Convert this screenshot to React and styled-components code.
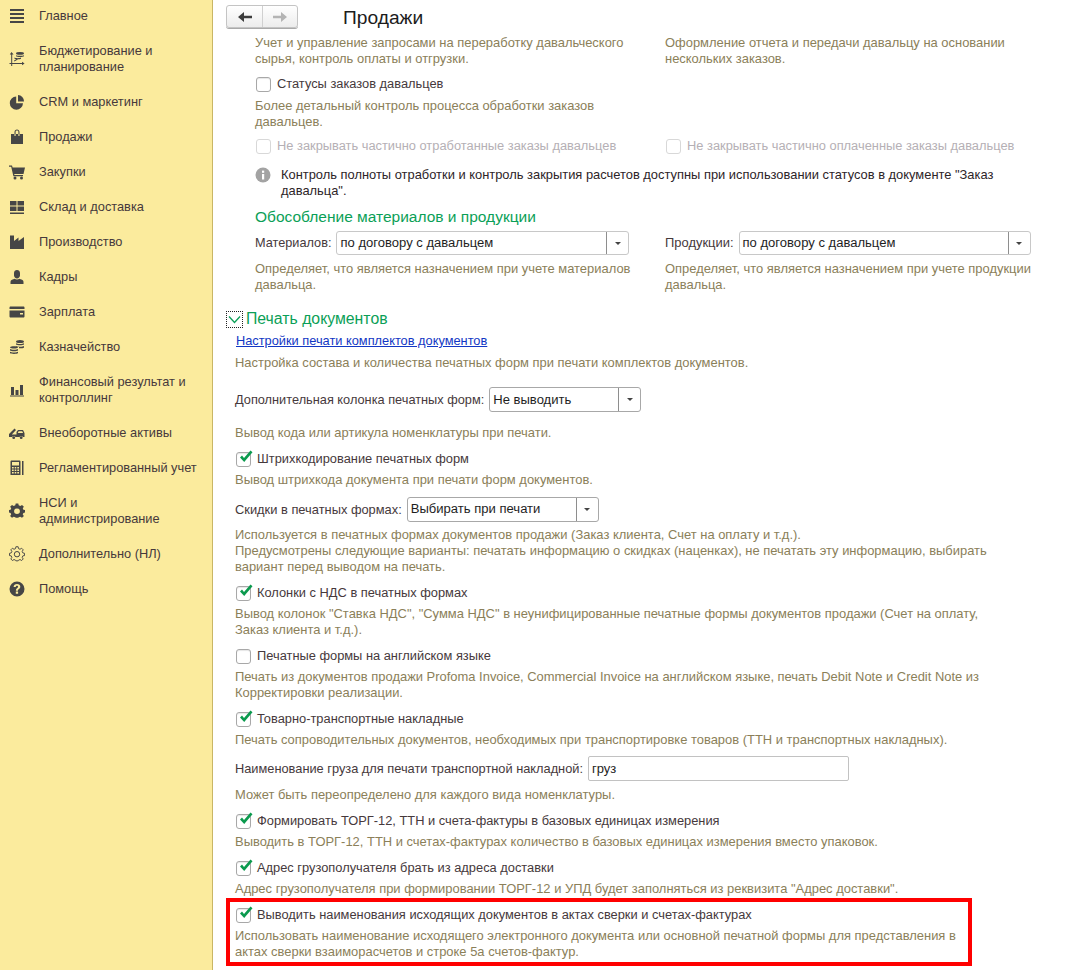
import React from "react";
import styled, { createGlobalStyle } from "styled-components";

const Global = createGlobalStyle`
  html, body { margin: 0; padding: 0; height: 970px; overflow: hidden; background: #fff; }
  body { font-family: "Liberation Sans", Arial, sans-serif; font-size: 12.8px; line-height: 16px; }
`;

const Page = styled.div`display: flex; width: 1087px; height: 970px; overflow: hidden;`;
const Sidebar = styled.nav`
  width: 212px; flex: none; height: 970px; box-sizing: content-box;
  background: #fbeb9d; border-right: 1px solid #c9b665;
`;
const NavItem = styled.div`
  display: flex; align-items: center; padding: 9px 0 10px 9px;
  color: #46393c; font-size: 12.8px;
  &:first-child { padding-top: 8px; }
`;
const NavIcon = styled.span`
  width: 16px; height: 16px; flex: none; margin-right: 14px; display: block;
  svg { display: block; width: 16px; height: 16px; fill: #464646; stroke: none; }
`;
const Main = styled.main`flex: 1; display: flex; flex-direction: column; min-width: 0; height: 970px;`;
const Header = styled.header`
  flex: none; height: 37px; display: flex; align-items: center; box-sizing: border-box;
  padding: 0 0 1px 13px; background: #fff;
`;
const NavGroup = styled.div`
  display: flex; width: 72px; height: 23px; margin-top: -3px; box-sizing: border-box;
  border: 1px solid #c4c4c4; border-radius: 3px; box-shadow: 0 1px 0 #a9a9a9;
  background: linear-gradient(#ffffff, #ececec);
`;
const NavBtn = styled.span`
  flex: ${(p) => p.$grow || 1}; display: flex; align-items: center; justify-content: center;
  & + & { border-left: 1px solid #d0d0d0; }
  svg { width: 14px; height: 12px; fill: ${(p) => p.$off ? "#b4b4b4" : "#3c3c3c"}; }
`;
const Title = styled.h1`margin: -1px 0 0 45px; font-size: 19.2px; line-height: 24px; font-weight: 400; color: #1c1c1c;`;
const Scroll = styled.div`flex: 1; overflow: hidden; min-height: 0;`;
const Content = styled.div`margin-top: -2px; padding-left: 22px;`;
const Upper = styled.div`padding-left: 20px; display: grid; grid-template-columns: 410px 1fr;`;
const Full = styled.div`grid-column: 1 / -1;`;
const Desc = styled.div`margin-top: ${(p) => p.$mt ?? 6}px; color: #8b8059; font-size: 12.95px; white-space: nowrap;`;
const CheckRow = styled.label`
  display: flex; align-items: center; height: 16px; margin-top: ${(p) => p.$mt ?? 10}px;
  color: ${(p) => p.$off ? "#b5b0b5" : "#46393c"}; font-size: 12.85px; white-space: nowrap;
`;
const Box = styled.span`
  position: relative; width: 15px; height: 15px; box-sizing: border-box; flex: none; margin-right: 6px;
  border: 1px solid ${(p) => p.$off ? "#d8d8d8" : "#a8a8a8"}; border-radius: 3px; background: #fff;
  margin-left: 1px;
  box-shadow: ${(p) => p.$off ? "none" : "inset 0 1px 1px #e6e6e6"};
  svg { position: absolute; left: 0; top: -4px; width: 17px; height: 17px; }
`;
const InfoRow = styled.div`display: flex; margin-top: 13px; color: #2d2428; font-size: 12.9px; white-space: nowrap;`;
const InfoIcon = styled.span`
  flex: none; width: 16px; height: 16px; margin-right: 10px;
  svg { display: block; width: 16px; height: 16px; }
`;
const Heading = styled.h2`
  margin: 8px 0 0; font-size: 15.5px; line-height: 20px; font-weight: 400; color: #0b9f57;
`;
const FieldRow = styled.div`
  display: flex; align-items: center; height: ${(p) => p.$h || 25}px; margin-top: ${(p) => p.$mt ?? 9}px;
  color: #46393c; white-space: nowrap;
`;
const FieldLabel = styled.span`margin-right: 5px; font-size: ${(p) => p.$fs || 12.8}px;`;
const Select = styled.div`
  display: flex; width: ${(p) => p.$w}px; height: 100%; box-sizing: border-box;
  border: 1px solid ${(p) => p.$dark ? "#a8a8a8" : "#c8c8c8"}; border-radius: 3px; background: #fff;
  color: #1e1e1e;
`;
const SelectText = styled.span`flex: 1; padding-left: 3px; line-height: ${(p) => p.$lh || 22}px; font-size: 13.05px;`;
const SelectBtn = styled.span`
  width: 21px; flex: none; border-left: 1px solid #8e8e8e; display: flex; align-items: center; justify-content: center;
  &::after { content: ""; border: 3px solid transparent; border-top: 3px solid #444; border-bottom: 0; }
`;
const TextInput = styled.div`
  width: 261px; height: 100%; box-sizing: border-box; border: 1px solid #c2c2c2; border-radius: 2px;
  padding-left: 3px; line-height: 23px; color: #1e1e1e; font-size: 13px;
`;
const Section = styled.div`display: flex; align-items: center; margin: 16px 0 0 -9px; height: 20px;`;
const Toggle = styled.span`
  width: 17px; height: 17px; box-sizing: border-box; border: 1px dotted #222; margin-right: 3px; flex: none;
  display: flex; align-items: center; justify-content: center;
  svg { width: 13px; height: 9px; fill: none; stroke: #0b9f57; stroke-width: 1.3; }
`;
const SectionTitle = styled(Heading)`margin: 0; font-size: 15.8px;`;
const Link = styled.a`display: block; margin: 4px 0 0 1px; color: #1237c4; text-decoration: underline; font-size: 12.8px;`;
const Highlight = styled.div`
  margin: 5px 0 0 -5px; width: 733px; padding: 5px 0 2px 5px;
  outline: 4px solid #ff0000;
`;

const I = ({ children }) => <NavIcon><svg viewBox="0 0 16 16">{children}</svg></NavIcon>;

const icons = {
  menu: <><rect x="1" y="1" width="14" height="2" /><rect x="1" y="5" width="14" height="2" /><rect x="1" y="9" width="14" height="2" /><rect x="1" y="13" width="14" height="2" /></>,
  budget: <><path d="M2.5 1 4.6 3.4H3.2V12H13V10.7L15.6 12.5 13 14.3V13H3.2V15H2.2V13H0.5V12H2.2V3.4H0.8Z" /><ellipse cx="11" cy="2.4" rx="4" ry="1.4" /><path d="M7 4.2C8 5 14 5 15 4.2V5.2C14 6.2 8 6.2 7 5.2ZM5.5 6.6C6.5 7.4 11 7.4 12 6.6V7.7C11 8.5 6.5 8.5 5.5 7.7ZM5 9.6 8.5 7.8 8.8 8.6 5.4 10.5Z" /></>,
  pie: <><path d="M7.2 2.5A6.6 6.6 0 1 0 14 9.3H7.2Z" /><path d="M9 1A6.4 6.4 0 0 1 15 7.5H9Z" /></>,
  bag: <><path d="M2 5H5.5V3C5.5 1.5 6.6.5 8 .5S10.5 1.5 10.5 3V5H14V15H2ZM6.6 5H9.4V3C9.4 2.2 8.8 1.6 8 1.6S6.6 2.2 6.6 3ZM5.5 5V7H6.6V5ZM9.4 5V7H10.5V5Z" fillRule="evenodd" /></>,
  cart: <><path d="M0 1.5H3L3.6 3.5H16L14.5 10H5.2L5.5 11H14V12.3H4.4L2.2 2.8H0Z" /><circle cx="6" cy="14" r="1.5" /><circle cx="12.5" cy="14" r="1.5" /></>,
  grid: <><rect x="1" y="2" width="6.5" height="4.5" /><rect x="8.5" y="2" width="6.5" height="4.5" /><rect x="1" y="7.5" width="6.5" height="4.5" /><rect x="8.5" y="7.5" width="6.5" height="4.5" /><rect x="1" y="13.5" width="14" height="1.5" /></>,
  factory: <path d="M1 1.5H5V7L9.5 3.5V7L15 3V15H1Z" />,
  person: <path d="M5 4C5 2 6.3 1 8 1S11 2 11 4V6.5C11 8 9.6 9.5 8 9.5S5 8 5 6.5ZM1.5 15V12.8C1.5 11 4 10.4 5.7 9.8 6.6 10.7 9.4 10.7 10.3 9.8 12 10.4 14.5 11 14.5 12.8V15Z" />,
  card: <path d="M1.5 2.5H14.5C15 2.5 15.5 3 15.5 3.5V5H.5V3.5C.5 3 1 2.5 1.5 2.5ZM.5 6.5H15.5V12.5C15.5 13 15 13.5 14.5 13.5H1.5C1 13.5.5 13 .5 12.5ZM11 9V10.5H14V9Z" fillRule="evenodd" />,
  coins: <><ellipse cx="11" cy="2.5" rx="4" ry="1.6" /><path d="M7 4.2C8 5.2 14 5.2 15 4.2V5.6C14 6.6 8 6.6 7 5.6ZM7 7C8 8 14 8 15 7V8.4C14 9.4 11 9.4 10 9.2V8H7ZM1 8.4C2 7 8 7 9 8.4 8 9.7 2 9.7 1 8.4ZM1 10C2 11 8 11 9 10V11.4C8 12.4 2 12.4 1 11.4ZM1 12.7C2 13.7 8 13.7 9 12.7V14C8 15.2 2 15.2 1 14Z" /></>,
  bars: <><rect x="2" y="5" width="3" height="8" /><rect x="6.5" y="8" width="3" height="5" /><rect x="11" y="3" width="3" height="10" /><rect x="1" y="13.5" width="14" height="1" /></>,
  truck: <><path d="M0 9 5.5 3.5 7 5 2.8 9.5H7.5V7L9 5H14L15.5 8V12H14A2 2 0 0 0 10.5 12H6.5A2 2 0 0 0 3 12H0ZM9.6 6.3 8.8 8H14.1L13.2 6.3Z" fillRule="evenodd" /><circle cx="4.7" cy="12.7" r="1.4" /><circle cx="12.2" cy="12.7" r="1.4" /></>,
  calc: <path d="M1.5 1.5C1.5 1 2 .5 2.5.5H10.5C11 .5 11.5 1 11.5 1.5V15H1.5ZM3 2V5.5H10V2ZM3 7V8.5H4.7V7ZM5.7 7V8.5H7.3V7ZM8.3 7V8.5H10V7ZM3 9.5V11H4.7V9.5ZM5.7 9.5V11H7.3V9.5ZM8.3 9.5V11H10V9.5ZM3 12V13.5H4.7V12ZM5.7 12V13.5H7.3V12ZM8.3 12V13.5H10V12ZM13 1H14.5V15H13Z" fillRule="evenodd" />,
  gear: <path d="M6.7 1H9.3L9.7 3 11.3 3.7 13 2.6 14.9 4.4 13.8 6.1 14.4 7.7 16 8V10.6L14.4 11 13.7 12.6 14.9 14.3 13 16.1 11.2 15 9.7 15.6 9.3 16H6.7L6.3 15.6 4.7 15 3 16.1 1.1 14.3 2.2 12.6 1.6 11 0 10.6V8L1.6 7.7 2.2 6.1 1.1 4.4 3 2.6 4.7 3.7 6.3 3ZM8 6.4A2.9 2.9 0 1 0 8 12.2 2.9 2.9 0 1 0 8 6.4Z" fillRule="evenodd" transform="translate(0 -.5) scale(1 .95)" />,
  gearO: <g fill="none" stroke="#464646" strokeWidth="1"><path d="M6.8 1H9.2L9.6 3 11.2 3.7 12.9 2.6 14.6 4.3 13.5 6 14.2 7.6 16 8V10.4L14.2 10.7 13.5 12.3 14.6 14 12.9 15.7 11.2 14.6 9.6 15.3 9.2 16H6.8L6.4 15.3 4.8 14.6 3.1 15.7 1.4 14 2.5 12.3 1.8 10.7 0 10.4V8L1.8 7.6 2.5 6 1.4 4.3 3.1 2.6 4.8 3.7 6.4 3Z" transform="translate(.5 -.2) scale(.94)" /><circle cx="8" cy="8.2" r="2.7" /></g>,
  help: <path d="M8 .5A7.5 7.5 0 1 0 8 15.5 7.5 7.5 0 0 0 8 .5ZM8 3C10 3 11.3 4.1 11.3 5.7 11.3 7 10.5 7.6 9.7 8.2 9.1 8.6 9 8.9 9 9.7H6.9C6.9 8.4 7.2 7.8 8 7.2 8.7 6.7 9.1 6.4 9.1 5.8 9.1 5.2 8.7 4.8 8 4.8 7.2 4.8 6.8 5.3 6.7 6.1H4.6C4.7 4.2 6 3 8 3ZM6.8 10.6H9.1V12.8H6.8Z" fillRule="evenodd" />,
};

const menu = [
  ["menu", "Главное"], ["budget", <>Бюджетирование и<br />планирование</>], ["pie", "CRM и маркетинг"],
  ["bag", "Продажи"], ["cart", "Закупки"], ["grid", "Склад и доставка"], ["factory", "Производство"],
  ["person", "Кадры"], ["card", "Зарплата"], ["coins", "Казначейство"],
  ["bars", <>Финансовый результат и<br />контроллинг</>], ["truck", "Внеоборотные активы"],
  ["calc", "Регламентированный учет"], ["gear", <>НСИ и<br />администрирование</>],
  ["gearO", "Дополнительно (НЛ)"], ["help", "Помощь"],
];

const Check = ({ on, off, mt, children }) => (
  <CheckRow $off={off} $mt={mt}>
    <Box $off={off}>
      {on && <svg viewBox="0 0 17 17"><path d="M3 8.5 5 6.5 7 9 13.5 1.5 15.5 3.2 7.2 13Z" fill="#0b9a4e" /></svg>}
    </Box>
    {children}
  </CheckRow>
);

const Sel = ({ w, dark, lh, children }) => (
  <Select $w={w} $dark={dark}><SelectText $lh={lh}>{children}</SelectText><SelectBtn /></Select>
);

export default function App() {
  return (
    <Page>
      <Global />
      <Sidebar>
        {menu.map(([k, t], i) => (
          <NavItem key={i}><I>{icons[k]}</I><span>{t}</span></NavItem>
        ))}
      </Sidebar>
      <Main>
        <Header>
          <NavGroup>
            <NavBtn $grow={37}><svg viewBox="0 0 14 12"><path d="M0 6 6 1V4.8H14V7.2H6V11Z" /></svg></NavBtn>
            <NavBtn $grow={35} $off><svg viewBox="0 0 14 12"><path d="M14 6 8 1V4.8H0V7.2H8V11Z" /></svg></NavBtn>
          </NavGroup>
          <Title>Продажи</Title>
        </Header>
        <Scroll>
          <Content>
            <Upper>
              <Desc $mt={0}>Учет и управление запросами на переработку давальческого<br />сырья, контроль оплаты и отгрузки.</Desc>
              <Desc $mt={0}>Оформление отчета и передачи давальцу на основании<br />нескольких заказов.</Desc>
              <Full>
                <Check mt={9}>Статусы заказов давальцев</Check>
                <Desc>Более детальный контроль процесса обработки заказов<br />давальцев.</Desc>
              </Full>
              <Check off mt={8}>Не закрывать частично отработанные заказы давальцев</Check>
              <Check off mt={8}>Не закрывать частично оплаченные заказы давальцев</Check>
              <Full>
                <InfoRow>
                  <InfoIcon>
                    <svg viewBox="0 0 16 16"><circle cx="8" cy="8" r="7.5" fill="#a3a3a3" /><rect x="7" y="7" width="2.2" height="5.5" fill="#fff" /><rect x="7" y="3.6" width="2.2" height="2.2" fill="#fff" /></svg>
                  </InfoIcon>
                  <span>Контроль полноты отработки и контроль закрытия расчетов доступны при использовании статусов в документе "Заказ<br />давальца".</span>
                </InfoRow>
                <Heading>Обособление материалов и продукции</Heading>
              </Full>
              <div>
                <FieldRow $h={24} $mt={4}><FieldLabel $fs={12.72}>Материалов:</FieldLabel><Sel w={293} lh={21}>по договору с давальцем</Sel></FieldRow>
                <Desc>Определяет, что является назначением при учете материалов<br />давальца.</Desc>
              </div>
              <div>
                <FieldRow $h={24} $mt={4}><FieldLabel $fs={12.95}>Продукции:</FieldLabel><Sel w={292} lh={21}>по договору с давальцем</Sel></FieldRow>
                <Desc>Определяет, что является назначением при учете продукции<br />давальца.</Desc>
              </div>
            </Upper>
            <Section>
              <Toggle><svg viewBox="0 0 13 9"><path d="M1 1.5 6.5 7.5 12 1.5" /></svg></Toggle>
              <SectionTitle>Печать документов</SectionTitle>
            </Section>
            <Link>Настройки печати комплектов документов</Link>
            <Desc>Настройка состава и количества печатных форм при печати комплектов документов.</Desc>
            <FieldRow $mt={16}><FieldLabel $fs={12.78}>Дополнительная колонка печатных форм:</FieldLabel><Sel w={152} dark lh={23}>Не выводить</Sel></FieldRow>
            <Desc $mt={13}>Вывод кода или артикула номенклатуры при печати.</Desc>
            <Check on>Штрихкодирование печатных форм</Check>
            <Desc $mt={5}>Вывод штрихкода документа при печати форм документов.</Desc>
            <FieldRow><FieldLabel $fs={12.87}>Скидки в печатных формах:</FieldLabel><Sel w={192} dark>Выбирать при печати</Sel></FieldRow>
            <Desc $mt={5}>Используется в печатных формах документов продажи (Заказ клиента, Счет на оплату и т.д.).<br />Предусмотрены следующие варианты: печатать информацию о скидках (наценках), не печатать эту информацию, выбирать<br />вариант перед выводом на печать.</Desc>
            <Check on>Колонки с НДС в печатных формах</Check>
            <Desc $mt={5}>Вывод колонок "Ставка НДС", "Сумма НДС" в неунифицированные печатные формы документов продажи (Счет на оплату,<br />Заказ клиента и т.д.).</Desc>
            <Check>Печатные формы на английском языке</Check>
            <Desc $mt={5}>Печать из документов продажи Profoma Invoice, Commercial Invoice на английском языке, печать Debit Note и Credit Note из<br />Корректировки реализации.</Desc>
            <Check on>Товарно-транспортные накладные</Check>
            <Desc $mt={5}>Печать сопроводительных документов, необходимых при транспортировке товаров (ТТН и транспортных накладных).</Desc>
            <FieldRow $mt={8}><FieldLabel>Наименование груза для печати транспортной накладной:</FieldLabel><TextInput>груз</TextInput></FieldRow>
            <Desc>Может быть переопределено для каждого вида номенклатуры.</Desc>
            <Check on>Формировать ТОРГ-12, ТТН и счета-фактуры в базовых единицах измерения</Check>
            <Desc $mt={5}>Выводить в ТОРГ-12, ТТН и счетах-фактурах количество в базовых единицах измерения вместо упаковок.</Desc>
            <Check on>Адрес грузополучателя брать из адреса доставки</Check>
            <Desc $mt={5}>Адрес грузополучателя при формировании ТОРГ-12 и УПД будет заполняться из реквизита "Адрес доставки".</Desc>
            <Highlight>
              <Check on mt={0}>Выводить наименования исходящих документов в актах сверки и счетах-фактурах</Check>
              <Desc $mt={5}>Использовать наименование исходящего электронного документа или основной печатной формы для представления в<br />актах сверки взаиморасчетов и строке 5а счетов-фактур.</Desc>
            </Highlight>
          </Content>
        </Scroll>
      </Main>
    </Page>
  );
}
